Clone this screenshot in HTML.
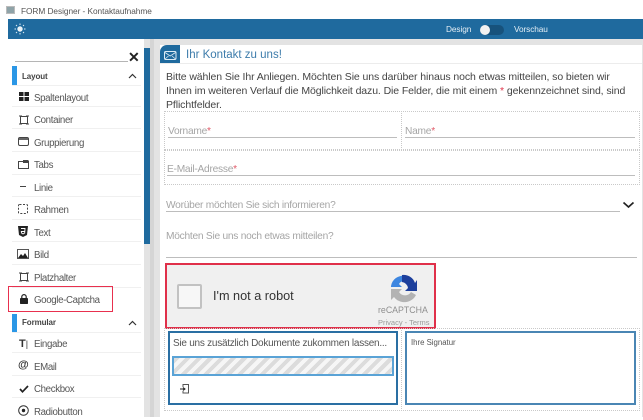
<!DOCTYPE html>
<html><head><meta charset="utf-8"><style>
html,body{margin:0;padding:0;background:#fff}
body{width:643px;height:417px;position:relative;overflow:hidden;font-family:"Liberation Sans",sans-serif}
.a{position:absolute}
.t{position:absolute;white-space:nowrap;line-height:14px}
.i{font-size:9.700px;letter-spacing:-.35px;color:#555;left:34px}
.s{position:absolute;left:12px;width:129px;height:1px;background:#f0f0f0}
.l{position:absolute;height:1px;background:#bdbdbd}
.p{font-size:10.200px;letter-spacing:-.25px;color:#a5a5a5}
.d{position:absolute;border:1px dotted #c9c9c9;box-sizing:border-box}
svg{position:absolute;overflow:visible}
b.r{color:#e05a68;font-weight:normal}
</style></head><body>
<div class="a" style="left:6px;top:6px;width:9px;height:8px;background:#8fa3a8;border:1px solid #bbb;box-sizing:border-box"></div>
<div class="t" style="left:21px;top:4px;font-size:8.300px;letter-spacing:-.05px;color:#555">FORM Designer - Kontaktaufnahme</div>

<div class="a" style="left:8px;top:19px;width:635px;height:20px;background:#1f6a9e"></div>
<svg style="left:14px;top:23px" width="12" height="12" viewBox="0 0 12 12"><circle cx="6" cy="6" r="2.700" fill="#e8f2f8"/><g stroke="#dcebf4" stroke-width="1"><path d="M6 .5v1.500M6 10v1.500M.5 6H2M10 6h1.500M2 2l1 1M9 9l1 1M2 10l1-1M9 3l1-1"/></g></svg>
<div class="t" style="left:446px;top:22px;font-size:8.300px;letter-spacing:-.1px;color:#e4eef5">Design</div>
<div class="a" style="left:480px;top:25px;width:24px;height:10px;border-radius:5px;background:#17527c"></div>
<div class="a" style="left:480px;top:25px;width:10px;height:10px;border-radius:50%;background:#f2f2f2"></div>
<div class="t" style="left:514px;top:22px;font-size:8.300px;letter-spacing:-.1px;color:#e4eef5">Vorschau</div>

<div class="a" style="left:8px;top:39px;width:635px;height:378px;background:#e3e3e3"></div>
<div class="a" style="left:8px;top:39px;width:136px;height:378px;background:#fff"></div>
<div class="a" style="left:144px;top:48px;width:6px;height:196px;background:#1f6a9e"></div>
<div class="a" style="left:150px;top:39px;width:4px;height:378px;background:#d5d5d5"></div>

<!-- sidebar -->
<div class="l" style="left:15px;top:61px;width:113px;background:#b5b5b5"></div>
<div class="t" style="left:128px;top:50px;font-size:14px;font-weight:bold;color:#222">✕</div>
<div class="a" style="left:12px;top:66px;width:5px;height:20px;background:#2b97e6"></div>
<div class="t" style="left:22px;top:70px;font-size:8px;font-weight:bold;letter-spacing:-.1px;color:#444">Layout</div>
<svg style="left:128px;top:73px" width="9" height="6"><path d="M1 5l3.500-3.500L8 5" fill="none" stroke="#333" stroke-width="1.200"/></svg>
<div class="s" style="top:85px"></div>
<svg style="left:19px;top:92px" width="10" height="9"><path d="M0 0h4.500v4H0zM5.500 0H10v4H5.500zM0 5h4.500v4H0zM5.500 5H10v4H5.500z" fill="#222"/></svg>
<div class="t i" style="top:92px">Spaltenlayout</div>
<div class="s" style="top:106px"></div>
<svg style="left:19px;top:115px" width="10" height="10"><path d="M1.500 1.500h7v7h-7z" fill="none" stroke="#444"/><path d="M0 1h3M0 9h3M7 1h3M7 9h3" stroke="#444"/></svg>
<div class="t i" style="top:114px">Container</div>
<div class="s" style="top:128px"></div>
<svg style="left:18px;top:137px" width="11" height="10"><rect x=".5" y=".5" width="10" height="8" rx="1.500" fill="none" stroke="#444"/><path d="M1 1h9v2H1z" fill="#666"/></svg>
<div class="t i" style="top:137px">Gruppierung</div>
<div class="s" style="top:151px"></div>
<svg style="left:18px;top:160px" width="11" height="9"><path d="M.5 1.500h10v7H.5z" fill="none" stroke="#444"/><path d="M5 0h5.500v3H5z" fill="#444"/></svg>
<div class="t i" style="top:159px">Tabs</div>
<div class="s" style="top:174px"></div>
<div class="a" style="left:20px;top:186px;width:6px;height:1px;background:#444"></div>
<div class="t i" style="top:182px">Linie</div>
<div class="s" style="top:196px"></div>
<svg style="left:18px;top:204px" width="10" height="10"><rect x=".5" y=".5" width="9" height="9" rx="1" fill="none" stroke="#444" stroke-dasharray="2 1.500"/></svg>
<div class="t i" style="top:204px">Rahmen</div>
<div class="s" style="top:219px"></div>
<svg style="left:18px;top:226px" width="10" height="11"><path d="M0 0h10l-1 9-4 2-4-2z" fill="#222"/><path d="M3 2.500h4L6.700 7 5 8 3.500 7 3.300 5.500H6.500" fill="none" stroke="#fff" stroke-width=".9"/></svg>
<div class="t i" style="top:227px">Text</div>
<div class="s" style="top:241px"></div>
<svg style="left:17px;top:249px" width="12" height="10"><rect x=".5" y=".5" width="11" height="9" fill="#fff" stroke="#555"/><path d="M1 9l3-4 2 2 2-3 3 5z" fill="#222"/></svg>
<div class="t i" style="top:249px">Bild</div>
<div class="s" style="top:264px"></div>
<svg style="left:19px;top:272px" width="10" height="10"><path d="M1.500 1.500h7v7h-7z" fill="none" stroke="#444"/><path d="M0 1h3M0 9h3M7 1h3M7 9h3" stroke="#444"/></svg>
<div class="t i" style="top:272px">Platzhalter</div>
<div class="s" style="top:287px"></div>

<div class="a" style="left:8px;top:286px;width:105px;height:26px;border:1px solid #e8304e;box-sizing:border-box"></div>
<svg style="left:20px;top:294px" width="8" height="10"><path d="M1.800 4V2.800a2.200 2.200 0 0 1 4.400 0V4" fill="none" stroke="#222" stroke-width="1.200"/><rect y="4" width="8" height="6" rx=".8" fill="#222"/></svg>
<div class="t i" style="top:294px">Google-Captcha</div>

<div class="a" style="left:12px;top:314px;width:5px;height:19px;background:#2b97e6"></div>
<div class="t" style="left:22px;top:316px;font-size:8px;font-weight:bold;letter-spacing:-.1px;color:#444">Formular</div>
<svg style="left:128px;top:320px" width="9" height="6"><path d="M1 5l3.500-3.500L8 5" fill="none" stroke="#333" stroke-width="1.200"/></svg>
<div class="s" style="top:332px"></div>
<div class="t" style="left:19px;top:337px;font-size:11px;font-weight:bold;color:#333">T<span style="font-weight:normal;font-size:9px">|</span></div>
<div class="t i" style="top:338px">Eingabe</div>
<div class="s" style="top:352px"></div>
<div class="t" style="left:18px;top:358px;font-size:11px;font-weight:bold;color:#333">@</div>
<div class="t i" style="top:361px">EMail</div>
<div class="s" style="top:375px"></div>
<svg style="left:19px;top:385px" width="10" height="8"><path d="M1 4l2.500 2.800L9 1" fill="none" stroke="#222" stroke-width="1.700"/></svg>
<div class="t i" style="top:383px">Checkbox</div>
<div class="s" style="top:397px"></div>
<svg style="left:18px;top:405px" width="11" height="11"><circle cx="5.500" cy="5.500" r="4.800" fill="none" stroke="#333"/><circle cx="5.500" cy="5.500" r="1.700" fill="#222"/></svg>
<div class="t i" style="top:406px">Radiobutton</div>

<!-- card -->
<div class="a" style="left:160px;top:45px;width:482px;height:372px;background:#fff"></div>
<div class="a" style="left:160px;top:45px;width:20px;height:19px;background:#1f6a9e;border-radius:7px 0 0 0"></div>
<svg style="left:164px;top:51px" width="13" height="9"><rect x=".5" y=".5" width="11.500" height="8" rx="1.200" fill="none" stroke="#dcebf4"/><path d="M1 1.500l5.200 3.500 5.300-3.500M1 8l3.500-3M11.500 8L8 5" fill="none" stroke="#dcebf4" stroke-width=".8"/></svg>
<div class="t" style="left:186px;top:48px;font-size:11.500px;color:#3d7cab">Ihr Kontakt zu uns!</div>
<div class="a" style="left:160px;top:63px;width:482px;height:1px;background:#ececec"></div>
<div class="t" style="left:166px;top:70px;font-size:10.500px;letter-spacing:-.1px;line-height:14px;color:#444;white-space:nowrap">Bitte wählen Sie Ihr Anliegen. Möchten Sie uns darüber hinaus noch etwas mitteilen, so bieten wir<br>Ihnen im weiteren Verlauf die Möglichkeit dazu. Die Felder, die mit einem <b class="r" style="color:#e0364c">*</b> gekennzeichnet sind, sind<br>Pflichtfelder.</div>

<div class="d" style="left:164px;top:111px;width:238px;height:39px"></div>
<div class="d" style="left:401px;top:111px;width:239px;height:39px"></div>
<div class="t p" style="left:168px;top:125px">Vorname<b class="r">*</b></div>
<div class="l" style="left:168px;top:137px;width:229px"></div>
<div class="t p" style="left:405px;top:125px">Name<b class="r">*</b></div>
<div class="l" style="left:405px;top:137px;width:230px"></div>

<div class="d" style="left:164px;top:150px;width:476px;height:35px"></div>
<div class="t p" style="left:167px;top:163px">E-Mail-Adresse<b class="r">*</b></div>
<div class="l" style="left:167px;top:175px;width:468px"></div>

<div class="t p" style="left:166px;top:199px">Worüber möchten Sie sich informieren?</div>
<div class="l" style="left:166px;top:211px;width:454px"></div>
<svg style="left:622px;top:201px" width="13" height="8"><path d="M1.500 1.500l5 4.500 5-4.500" fill="none" stroke="#222" stroke-width="1.700"/></svg>
<div class="t p" style="left:166px;top:230px">Möchten Sie uns noch etwas mitteilen?</div>
<div class="l" style="left:166px;top:257px;width:471px"></div>

<!-- captcha -->
<div class="a" style="left:165px;top:263px;width:271px;height:66px;background:#f0f0f0;border:2px solid #e0304a;box-sizing:border-box"></div>
<div class="a" style="left:177px;top:284px;width:25px;height:25px;background:#f7f7f7;border:2px solid #c2c2c2;border-radius:2px;box-sizing:border-box"></div>
<div class="t" style="left:213px;top:289px;font-size:12.700px;color:#333">I'm not a robot</div>
<svg style="left:388px;top:273px" width="30" height="30" viewBox="0 0 30 30"><path d="M3 13A12 12 0 0 1 17 3l2 5a7 7 0 0 0-8 3l3 3H3z" fill="#3d86e0"/><path d="M14 2A12 12 0 0 1 27 10l2-3v11H17l3-3a7 7 0 0 0-6-6z" fill="#1d3f9c"/><path d="M3 16h11l-3 3a7 7 0 0 0 12 0l5 3A13 13 0 0 1 6 24l-3 3z" fill="#b3b3b3"/></svg>
<div class="t" style="left:378px;top:303px;font-size:8.800px;color:#8f8f8f">reCAPTCHA</div>
<div class="t" style="left:378px;top:316px;font-size:7.500px;color:#9a9a9a">Privacy - Terms</div>

<!-- bottom -->
<div class="d" style="left:164px;top:328px;width:238px;height:83px"></div>
<div class="d" style="left:401px;top:328px;width:239px;height:83px"></div>
<div class="a" style="left:168px;top:331px;width:230px;height:74px;border:2px solid #2a6fa3;box-sizing:border-box"></div>
<div class="t" style="left:173px;top:337px;font-size:10px;letter-spacing:-.25px;color:#555">Sie uns zusätzlich Dokumente zukommen lassen...</div>
<div class="a" style="left:172px;top:356px;width:222px;height:20px;border:2px solid #5aa3d6;box-sizing:border-box;background:repeating-linear-gradient(135deg,#dcdcdc 0 4px,#f6f6f6 4px 8px)"></div>
<svg style="left:180px;top:384px" width="9" height="10"><path d="M3 3V.5h5.500v8.500H3V7" fill="none" stroke="#555"/><path d="M0 5h4.500M3 3.500L5 5 3 6.500" fill="none" stroke="#222"/></svg>
<div class="a" style="left:405px;top:331px;width:231px;height:74px;border:2px solid #4a86b4;box-sizing:border-box"></div>
<div class="t" style="left:411px;top:336px;font-size:7.800px;color:#555">Ihre Signatur</div>
</body></html>
